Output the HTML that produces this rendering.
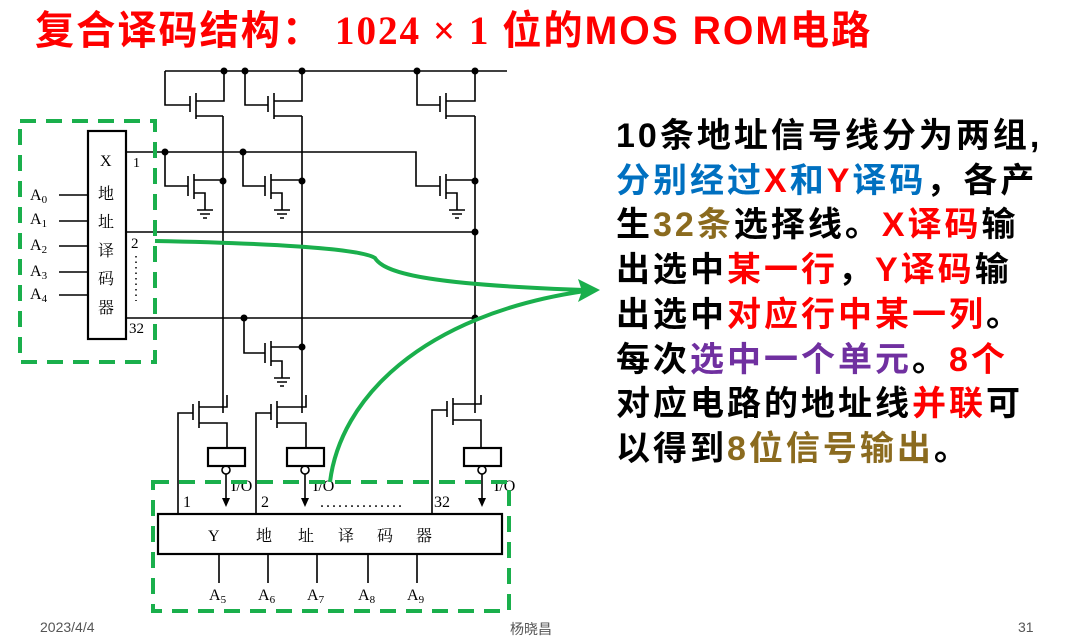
<!DOCTYPE html>
<html><head><meta charset="utf-8"><style>
body{margin:0;width:1068px;height:629px;overflow:hidden;background:#fff;position:relative;font-family:"Liberation Sans","Noto Sans CJK SC",sans-serif}
.t{position:absolute;left:35px;top:8px;color:#f00;font-weight:bold;font-size:40px;letter-spacing:2px;white-space:nowrap;transform-origin:0 0;transform:scaleX(0.98);font-family:"Liberation Serif","Noto Sans CJK SC",sans-serif;line-height:46px}
.t .m{font-family:"Liberation Sans Narrow","Liberation Sans",sans-serif}
.r{position:absolute;left:616px;font-size:34px;font-weight:bold;white-space:nowrap;letter-spacing:3px;line-height:40px;color:#000}
.b{color:#0070c0}.rd{color:#f00}.br{color:#8b6b1f}.p{color:#7030a0}
.f{position:absolute;top:619px;font-size:14px;color:#555}
</style></head><body>
<div class="t">复合译码结构： 1024 × 1 位的<span class="m">MOS ROM</span>电路</div>
<svg width="1068" height="629" style="position:absolute;left:0;top:0" font-family="Liberation Serif,Noto Serif CJK SC,serif">
<g stroke="#000" stroke-width="1.6" fill="none">
<path d="M165 71H507"/>
<path d="M223 116V413M302 116V413M475 116V413"/>
<path d="M165 71V105H190M190 96V112M196 93V119M196 101H224V71M196 116H223"/>
<path d="M245 71V105H268M268 96V112M274 93V119M274 101H302V71M274 116H302"/>
<path d="M417 71V105H440M440 96V112M446 93V119M446 101H475V71M446 116H475"/>
<rect x="88" y="131" width="38" height="208" stroke-width="2.2"/>
<path d="M59 195H88M59 221H88M59 246H88M59 272H88M59 295H88"/>
<path d="M126 152H416V186H440"/>
<path d="M165 152V186H188M188 176V196M194 174V199M194 180H223M194 193H205V210M197 210H213M200 214H210M203 218H207"/>
<path d="M243 152V186H265M265 176V196M271 174V199M271 180H302M271 193H282V210M274 210H290M277 214H287M280 218H284"/>
<path d="M440 176V196M446 174V199M446 180H475M446 193H457V210M449 210H465M452 214H462M455 218H459"/>
<path d="M126 232H475M126 318H475"/>
<path d="M244 318V353H265M265 343V363M271 341V366M271 347H302M271 361H282V378M274 378H290M277 382H287M280 386H284"/>
<path d="M178 514V413H193M193 404V420M199 401V428M199 407H227V395M199 423H227V447"/>
<path d="M256 514V413H271M271 404V420M277 401V428M277 407H306V395M277 423H306V447"/>
<path d="M432 514V410H447M447 401V417M453 398V425M453 404H481V395M453 420H481V447"/>
<rect x="208" y="448" width="37" height="18" stroke-width="2.2"/>
<rect x="287" y="448" width="37" height="18" stroke-width="2.2"/>
<rect x="464" y="448" width="37" height="18" stroke-width="2.2"/>
<circle cx="226" cy="470" r="4"/><circle cx="305" cy="470" r="4"/><circle cx="482" cy="470" r="4"/>
<path d="M226 474V500M305 474V500M482 474V500"/>
<rect x="158" y="514" width="344" height="40" stroke-width="2.2"/>
<path d="M219 554V583M268 554V583M317 554V583M368 554V583M417 554V583"/>
</g>
<g fill="#000">
<circle cx="224" cy="71" r="3.5"/><circle cx="245" cy="71" r="3.5"/><circle cx="302" cy="71" r="3.5"/><circle cx="417" cy="71" r="3.5"/><circle cx="475" cy="71" r="3.5"/>
<circle cx="165" cy="152" r="3.5"/><circle cx="243" cy="152" r="3.5"/>
<circle cx="223" cy="181" r="3.5"/><circle cx="302" cy="181" r="3.5"/><circle cx="475" cy="181" r="3.5"/>
<circle cx="475" cy="232" r="3.5"/><circle cx="244" cy="318" r="3.5"/><circle cx="475" cy="318" r="3.5"/><circle cx="302" cy="347" r="3.5"/>
<path d="M222 498h8l-4 9zM301 498h8l-4 9zM478 498h8l-4 9z"/>
</g>
<g font-size="16" fill="#000">
<text x="100" y="166">X</text>
<text x="98" y="199">地</text><text x="98" y="227">址</text><text x="98" y="256">译</text><text x="98" y="284">码</text><text x="98" y="313">器</text>
<text x="133" y="167" font-size="14">1</text><text x="131" y="248" font-size="15">2</text><text x="129" y="333" font-size="15">32</text>
<text x="30" y="200">A<tspan font-size="11" dy="3">0</tspan></text>
<text x="30" y="224">A<tspan font-size="11" dy="3">1</tspan></text>
<text x="30" y="250">A<tspan font-size="11" dy="3">2</tspan></text>
<text x="30" y="276">A<tspan font-size="11" dy="3">3</tspan></text>
<text x="30" y="299">A<tspan font-size="11" dy="3">4</tspan></text>
<text x="231" y="491">I/O</text><text x="313" y="491">I/O</text><text x="494" y="491">I/O</text>
<text x="183" y="507">1</text><text x="261" y="507">2</text><text x="434" y="507">32</text>
<text x="320" y="507" letter-spacing="2">..............</text>
<text x="208" y="541">Y</text><text x="256" y="541">地</text><text x="298" y="541">址</text><text x="338" y="541">译</text><text x="377" y="541">码</text><text x="416" y="541">器</text>
<text x="209" y="600">A<tspan font-size="11" dy="3">5</tspan></text>
<text x="258" y="600">A<tspan font-size="11" dy="3">6</tspan></text>
<text x="307" y="600">A<tspan font-size="11" dy="3">7</tspan></text>
<text x="358" y="600">A<tspan font-size="11" dy="3">8</tspan></text>
<text x="407" y="600">A<tspan font-size="11" dy="3">9</tspan></text>
<path d="M136 256v45" stroke="#000" stroke-width="1.5" stroke-dasharray="1.5 4"/>
</g>
<g stroke="#1aaf4c" stroke-width="4" fill="none" stroke-dasharray="16 10">
<rect x="20" y="121" width="135" height="241"/>
<rect x="153" y="482" width="356" height="129"/>
</g>
<g stroke="#1aaf4c" stroke-width="4" fill="none">
<path d="M155 241C260 243 360 248 375 258C385 275 440 285 585 290"/>
<path d="M330 482C340 400 420 315 585 291"/>
</g>
<path d="M600 290L578 279L582 291L578 302Z" fill="#1aaf4c"/>
</svg>
<div class="r" style="top:116px">10条地址信号线分为两组,</div>
<div class="r" style="top:161px"><span class="b">分别经过</span><span class="rd">X</span><span class="b">和</span><span class="rd">Y</span><span class="b">译码</span>，各产</div>
<div class="r" style="top:205px">生<span class="br">32条</span>选择线。<span class="rd">X译码</span>输</div>
<div class="r" style="top:250px">出选中<span class="rd">某一行</span>，<span class="rd">Y译码</span>输</div>
<div class="r" style="top:295px">出选中<span class="rd">对应行中某一列</span>。</div>
<div class="r" style="top:340px">每次<span class="p">选中一个单元</span>。<span class="rd">8个</span></div>
<div class="r" style="top:384px">对应电路的地址线<span class="rd">并联</span>可</div>
<div class="r" style="top:429px">以得到<span class="br">8位信号输出</span>。</div>
<div class="f" style="left:40px">2023/4/4</div>
<div class="f" style="left:510px">杨晓昌</div>
<div class="f" style="left:1018px">31</div>
</body></html>
